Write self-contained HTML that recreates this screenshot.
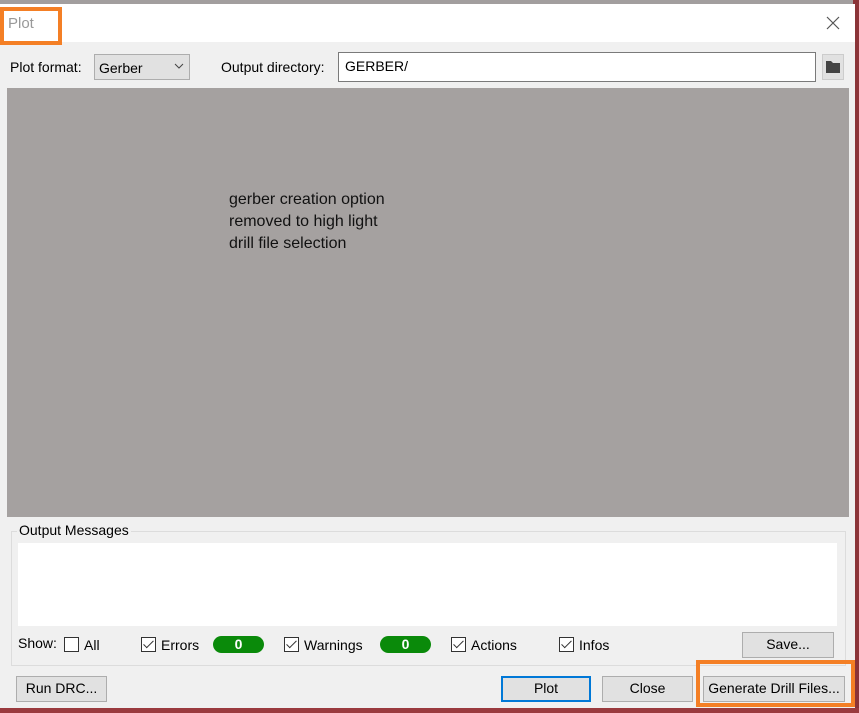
<!DOCTYPE html>
<html><head><style>
*{margin:0;padding:0;box-sizing:border-box}
body{width:859px;height:713px;position:relative;overflow:hidden;background:#8d3a3c;font-family:"Liberation Sans",sans-serif;font-size:14px;color:#000}
.a{position:absolute}
.btn{position:absolute;background:#e1e1e1;border:1px solid #adadad;text-align:center;font-size:14px;line-height:22px}
.cb{position:absolute;width:15px;height:15px;border:1px solid #333;background:#fff}
.cb.c::after{content:"";position:absolute;left:4px;top:0px;width:4px;height:9px;border:solid #333;border-width:0 1.5px 1.5px 0;transform:rotate(45deg)}
.pill{position:absolute;width:51px;height:17px;border-radius:9px;background:#0a8a0a;color:#fff;font-weight:bold;text-align:center;line-height:17px;font-size:14px}
</style></head><body>
<div class="a" style="left:0;top:0;width:859px;height:4px;background:#a29e9e"></div>
<div class="a" style="left:853px;top:0;width:6px;height:713px;background:#8b3438"></div>
<div class="a" style="left:0;top:4px;width:855px;height:704px;background:#f0f0f0"></div>
<div class="a" style="left:0;top:4px;width:855px;height:38px;background:#fff"></div>
<div class="a" style="left:8px;top:15px;color:#999;font-size:15px">Plot</div>
<div class="a" style="left:0;top:7px;width:62px;height:38px;border:4px solid #f47f25"></div>
<svg class="a" style="left:826px;top:16px" width="14" height="14"><path d="M1 1L13 13M13 1L1 13" stroke="#555" stroke-width="1.2"/></svg>
<div class="a" style="left:10px;top:59px">Plot format:</div>
<div class="a" style="left:94px;top:54px;width:96px;height:26px;background:#e1e1e1;border:1px solid #adadad;padding:5px 0 0 4px">Gerber</div>
<svg class="a" style="left:174px;top:63px" width="10" height="7"><path d="M1 1L5 5L9 1" stroke="#444" fill="none"/></svg>
<div class="a" style="left:221px;top:59px">Output directory:</div>
<div class="a" style="left:338px;top:52px;width:478px;height:30px;background:#fff;border:1px solid #7a7a7a;padding:5px 0 0 6px">GERBER/</div>
<div class="a" style="left:822px;top:54px;width:22px;height:26px;background:#e1e1e1;border:1px solid #ccc"></div>
<svg class="a" style="left:825px;top:59px" width="16" height="15"><path d="M1 2h5l2 2h7v10H1z" fill="#444"/></svg>
<div class="a" style="left:7px;top:88px;width:842px;height:429px;background:#a5a1a0"></div>
<div class="a" style="left:229px;top:189px;font-size:16px;line-height:22px;color:#111">gerber creation option<br>removed to high light<br>drill file selection</div>
<div class="a" style="left:11px;top:531px;width:835px;height:135px;border:1px solid #dcdcdc"></div>
<div class="a" style="left:17px;top:522px;background:#f0f0f0;padding:0 2px">Output Messages</div>
<div class="a" style="left:18px;top:543px;width:819px;height:83px;background:#fff"></div>
<div class="a" style="left:18px;top:635px">Show:</div>
<div class="cb" style="left:64px;top:637px"></div><div class="a" style="left:84px;top:637px">All</div>
<div class="cb c" style="left:141px;top:637px"></div><div class="a" style="left:161px;top:637px">Errors</div>
<div class="pill" style="left:213px;top:636px">0</div>
<div class="cb c" style="left:284px;top:637px"></div><div class="a" style="left:304px;top:637px">Warnings</div>
<div class="pill" style="left:380px;top:636px">0</div>
<div class="cb c" style="left:451px;top:637px"></div><div class="a" style="left:471px;top:637px">Actions</div>
<div class="cb c" style="left:559px;top:637px"></div><div class="a" style="left:579px;top:637px">Infos</div>
<div class="btn" style="left:742px;top:632px;width:92px;height:26px">Save...</div>
<div class="btn" style="left:16px;top:676px;width:91px;height:26px">Run DRC...</div>
<div class="btn" style="left:501px;top:676px;width:90px;height:26px;border:2px solid #0078d7;line-height:21px">Plot</div>
<div class="btn" style="left:602px;top:676px;width:91px;height:26px">Close</div>
<div class="btn" style="left:703px;top:676px;width:142px;height:26px">Generate Drill Files...</div>
<div class="a" style="left:696px;top:660px;width:159px;height:47px;border:4px solid #f47f25"></div>
<div class="a" style="left:0;top:708px;width:859px;height:5px;background:#9a3a3e"></div>
</body></html>
